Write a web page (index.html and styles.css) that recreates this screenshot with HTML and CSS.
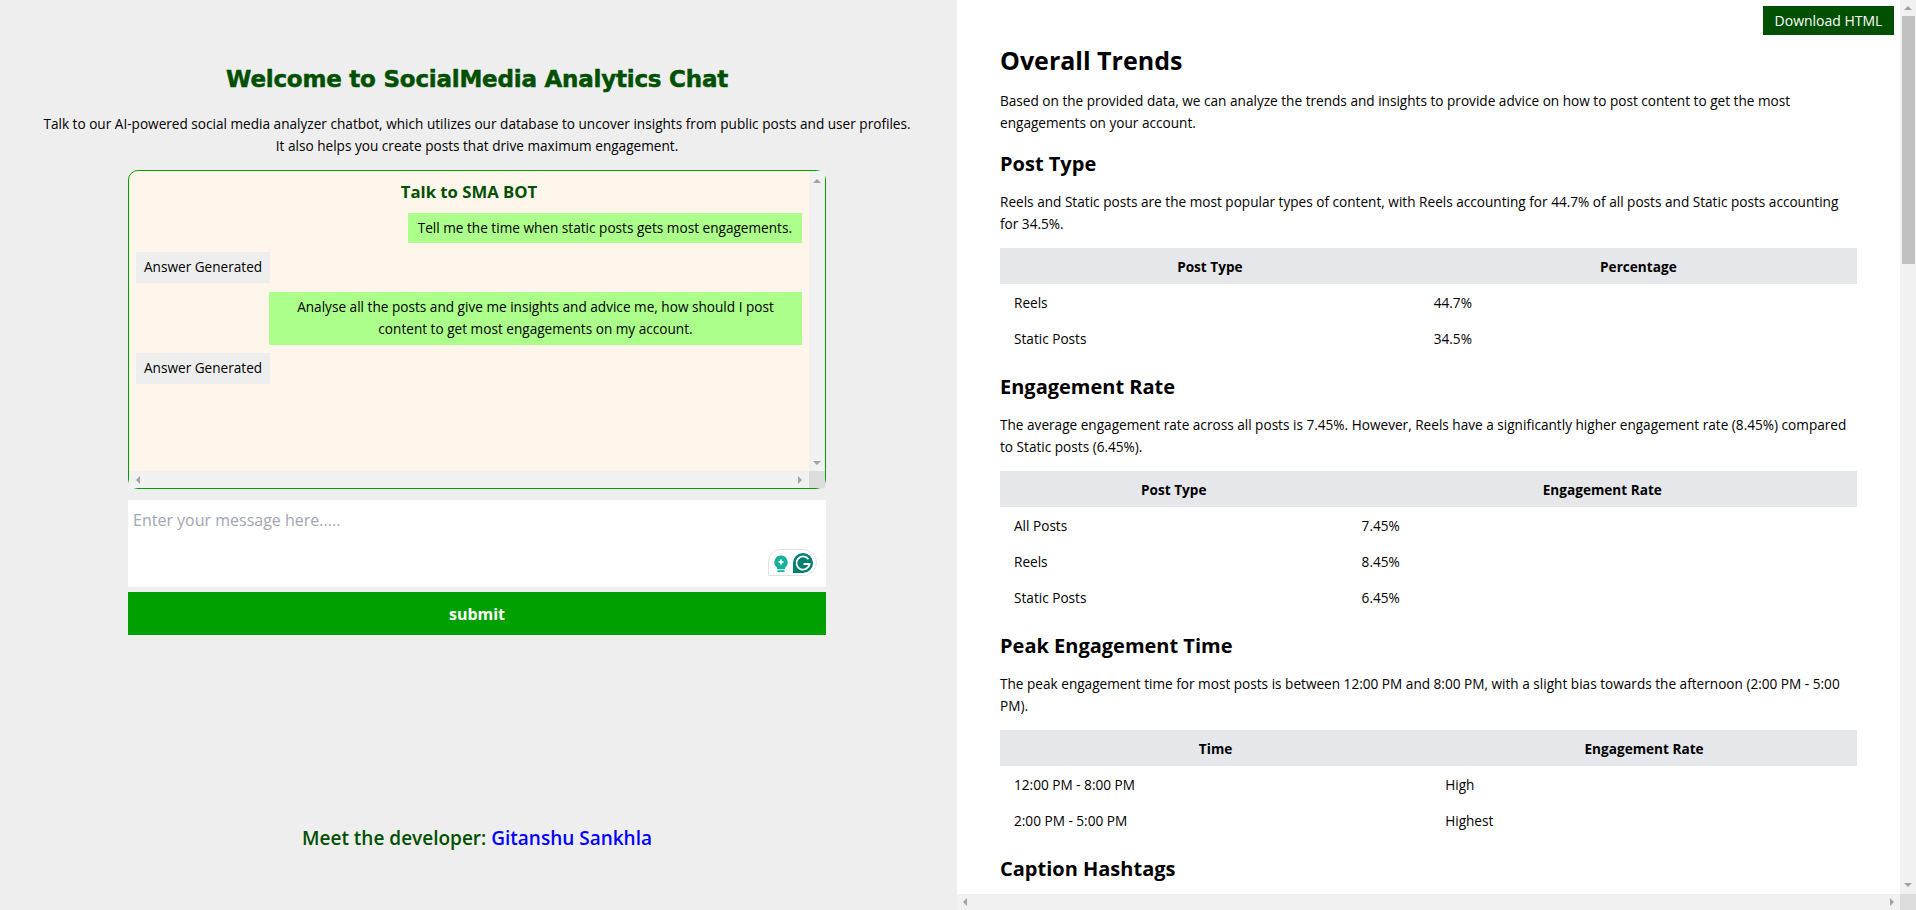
FILE: index.html
```html
<!DOCTYPE html>
<html lang="en">
<head>
    <meta charset="UTF-8">
    <meta name="viewport" content="width=device-width, initial-scale=1.0">
    <title>SocialMedia Analytics Chat</title>
    <link rel="stylesheet" href="styles.css">
</head>
<body>
    <div class="app">
        <section class="chat-side">
            <h1 class="welcome">Welcome to SocialMedia Analytics Chat</h1>
            <p class="intro">Talk to our AI-powered social media analyzer chatbot, which utilizes our database to uncover insights from public posts and user profiles.<br>It also helps you create posts that drive maximum engagement.</p>

            <div class="chat-box">
                <div class="chat-body">
                    <h2 class="chat-title">Talk to SMA BOT</h2>
                    <div class="msg msg-user">Tell me the time when static posts gets most engagements.</div>
                    <div class="msg msg-bot">Answer Generated</div>
                    <div class="msg msg-user msg-wide">Analyse all the posts and give me insights and advice me, how should I post content to get most engagements on my account.</div>
                    <div class="msg msg-bot">Answer Generated</div>
                </div>
                <div class="vbar vbar-chat"><i class="arrow arrow-up"></i><i class="arrow arrow-down"></i></div>
                <div class="hbar hbar-chat"><i class="arrow arrow-left"></i><i class="arrow arrow-right"></i></div>
                <div class="bar-corner"></div>
            </div>

            <form class="chat-form">
                <div class="input-wrap">
                    <textarea class="chat-input" placeholder="Enter your message here....."></textarea>
                    <div class="grammar-badge">
                        <svg width="49" height="27" viewBox="0 0 49 27">
                            <path d="M12 .5H35A13.5 13 0 0 1 48.500 13.500A13 13 0 0 1 35.500 26.500H.5V12A11.500 11.500 0 0 1 12 .5Z" fill="#fff" stroke="#dfe1ea"/>
                            <path d="M13 6.500a6.700 6.700 0 0 1 4.300 11.800l-.5 2H9.200l-.5-2A6.700 6.700 0 0 1 13 6.500Z" fill="#15b097"/>
                            <rect x="9.500" y="21.300" width="7" height="1.800" fill="#15b097"/>
                            <path d="M13 9.500l1.100 2.400 2.400 1.100-2.400 1.100-1.100 2.400-1.100-2.400-2.400-1.100 2.400-1.100Z" fill="#fff"/>
                            <path d="M35 4A10 10 0 0 1 35 24H25V14A10 10 0 0 1 35 4Z" fill="#027e6f"/>
                            <path d="M40.500 10.300A6.600 6.600 0 1 0 41.600 15H35.500" fill="none" stroke="#fff" stroke-width="1.800"/>
                        </svg>
                    </div>
                </div>
                <button type="button" class="submit-btn">submit</button>
            </form>

            <p class="credit">Meet the developer: <a href="#">Gitanshu Sankhla</a></p>
        </section>

        <section class="report-side">
            <button type="button" class="download-btn">Download HTML</button>
            <div class="report">
                <h1>Overall Trends</h1>
                <p>Based on the provided data, we can analyze the trends and insights to provide advice on how to post content to get the most engagements on your account.</p>

                <h2>Post Type</h2>
                <p>Reels and Static posts are the most popular types of content, with Reels accounting for 44.7% of all posts and Static posts accounting for 34.5%.</p>
                <table>
                    <thead><tr><th>Post Type</th><th>Percentage</th></tr></thead>
                    <tbody>
                        <tr><td>Reels</td><td>44.7%</td></tr>
                        <tr><td>Static Posts</td><td>34.5%</td></tr>
                    </tbody>
                </table>

                <h2>Engagement Rate</h2>
                <p>The average engagement rate across all posts is 7.45%. However, Reels have a significantly higher engagement rate (8.45%) compared to Static posts (6.45%).</p>
                <table>
                    <thead><tr><th>Post Type</th><th>Engagement Rate</th></tr></thead>
                    <tbody>
                        <tr><td>All Posts</td><td>7.45%</td></tr>
                        <tr><td>Reels</td><td>8.45%</td></tr>
                        <tr><td>Static Posts</td><td>6.45%</td></tr>
                    </tbody>
                </table>

                <h2>Peak Engagement Time</h2>
                <p>The peak engagement time for most posts is between 12:00 PM and 8:00 PM, with a slight bias towards the afternoon (2:00 PM - 5:00 PM).</p>
                <table>
                    <thead><tr><th>Time</th><th>Engagement Rate</th></tr></thead>
                    <tbody>
                        <tr><td>12:00 PM - 8:00 PM</td><td>High</td></tr>
                        <tr><td>2:00 PM - 5:00 PM</td><td>Highest</td></tr>
                    </tbody>
                </table>

                <h2>Caption Hashtags</h2>
            </div>
            <div class="vbar vbar-report"><i class="arrow arrow-up"></i><div class="bar-thumb"></div><i class="arrow arrow-down"></i></div>
            <div class="hbar hbar-report"><i class="arrow arrow-left"></i><i class="arrow arrow-right"></i></div>
            <div class="bar-corner"></div>
        </section>
    </div>
</body>
</html>
```

FILE: styles.css
```css
* {
    box-sizing: border-box;
}

html, body {
    height: 100%;
    margin: 0;
    overflow: hidden;
}

body {
    font-family: "Open Sans", "Noto Sans", Arial, sans-serif;
    font-size: 13.62px;
    line-height: 22px;
    color: #000;
    background-color: #eeeeee;
}

.app {
    display: flex;
    height: 100vh;
}

/* left side */
.chat-side {
    width: 957px;
    padding: 0 131px 0 128px;
    display: flex;
    flex-direction: column;
}

.welcome {
    margin: 61px -128px 0 -128px;
    font-family: "DejaVu Sans", Verdana, sans-serif;
    font-size: 23px;
    line-height: 36px;
    font-weight: bold;
    letter-spacing: -0.22px;
    -webkit-text-stroke: 0.5px #005000;
    color: #005000;
    text-align: center;
}

.intro {
    margin: 16px -128px 0 -128px;
    text-align: center;
}

.chat-box {
    height: 319px;
    margin-top: 13px;
    background-color: #fff6eb;
    border: 1px solid #00a000;
    border-radius: 10px;
    display: grid;
    grid-template-columns: 1fr 16px;
    grid-template-rows: 1fr 17px;
}

.chat-body {
    min-width: 0;
    padding: 6px 7px 0 7px;
    display: flex;
    flex-direction: column;
    align-items: flex-start;
}

.chat-title {
    align-self: center;
    margin: 0 0 6px 0;
    font-size: 16.7px;
    line-height: 30px;
    font-weight: bold;
    color: #005000;
}

.msg {
    padding: 4px 10px;
    margin-bottom: 9px;
}

.msg-user {
    align-self: flex-end;
    background-color: #adff8b;
    text-align: center;
}

.msg-wide {
    width: 533px;
    padding: 4px 20px 5px 20px;
    margin-bottom: 8px;
}

.msg-bot {
    background-color: #eeeeee;
    padding: 4px 8px 5px 8px;
}

.chat-form {
    margin-top: 11px;
}

.input-wrap {
    position: relative;
}

.chat-input {
    display: block;
    width: 100%;
    height: 87px;
    padding: 8px 5px;
    border: none;
    outline: none;
    resize: none;
    background: #fff;
    font-family: inherit;
    font-size: 16px;
    line-height: 24px;
}

.chat-input::placeholder {
    color: #a3a6b1;
}

.grammar-badge {
    position: absolute;
    right: 9px;
    bottom: 11px;
    height: 27px;
}

.submit-btn {
    display: block;
    width: 100%;
    height: 43px;
    margin-top: 5px;
    border: none;
    background-color: #00a000;
    color: #fff;
    font-family: inherit;
    font-size: 16px;
    font-weight: bold;
}

.credit {
    margin: auto -128px 57px -128px;
    font-size: 19px;
    line-height: 30px;
    font-weight: 600;
    color: #005000;
    text-align: center;
}

.credit a {
    color: #0000ff;
    text-decoration: none;
}

/* right side */
.report-side {
    position: relative;
    flex: 1;
    min-width: 0;
    background-color: #fff;
    display: grid;
    grid-template-columns: 1fr 16px;
    grid-template-rows: 1fr 16px;
}

.download-btn {
    position: absolute;
    top: 6px;
    right: 22px;
    z-index: 2;
    width: 131px;
    height: 29px;
    border: none;
    background-color: #005000;
    color: #fff;
    font-family: inherit;
    font-size: 14px;
}

.report {
    min-width: 0;
    min-height: 0;
    overflow: hidden;
    padding: 43px 43px 0 43px;
}

.report h1 {
    margin: 0;
    font-size: 25px;
    line-height: 34px;
    font-weight: bold;
}

.report h2 {
    margin: 15px 0 0 0;
    font-size: 20px;
    line-height: 30px;
    font-weight: bold;
}

.report p {
    margin: 13px 0 0 0;
}

.report p + table {
    margin-top: 13px;
}

.report h2 + p {
    margin-top: 12px;
}

.report table {
    width: 100%;
    border-collapse: collapse;
}

.report th {
    height: 36.3px;
    padding: 1px 14px 0 14px;
    background-color: #e5e7eb;
    font-weight: bold;
    text-align: center;
}

.report td {
    height: 36.3px;
    padding: 1px 14px 0 14px;
}

/* scrollbars, drawn by hand */
.vbar {
    display: flex;
    flex-direction: column;
    align-items: center;
    justify-content: space-between;
    background-color: #f1f1f1;
}

.vbar-chat {
    padding: 8px 0 6px 0;
}

.vbar-report {
    padding: 6px 0 7px 0;
}

.bar-thumb {
    width: 13px;
    height: 248px;
    margin: 6px 0 auto 0;
    background-color: #c1c1c1;
}

.hbar {
    display: flex;
    align-items: center;
    justify-content: space-between;
    background-color: #f1f1f1;
}

.hbar-chat {
    padding: 0 7px;
}

.hbar-report {
    padding: 0 6px;
}

.bar-corner {
    background-color: #dcdcdc;
}

.arrow {
    display: block;
    width: 0;
    height: 0;
}

.arrow-up {
    border-left: 4px solid transparent;
    border-right: 4px solid transparent;
    border-bottom: 4px solid #a3a3a3;
}

.arrow-down {
    border-left: 4px solid transparent;
    border-right: 4px solid transparent;
    border-top: 4px solid #a3a3a3;
}

.arrow-left {
    border-top: 4px solid transparent;
    border-bottom: 4px solid transparent;
    border-right: 4px solid #a3a3a3;
}

.arrow-right {
    border-top: 4px solid transparent;
    border-bottom: 4px solid transparent;
    border-left: 4px solid #a3a3a3;
}
```
